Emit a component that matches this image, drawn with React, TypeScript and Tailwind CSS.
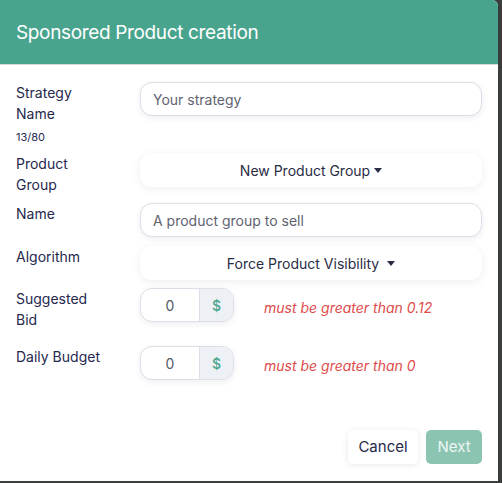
import type { ReactNode } from "react";

function Caret() {
  return (
    <svg width="8" height="5" viewBox="0 0 8 5" aria-hidden className="shrink-0">
      <path d="M0 0h8L4 5z" fill="currentColor" />
    </svg>
  );
}

function Row({ label, note, className, children }: { label: ReactNode; note?: string; className?: string; children: ReactNode }) {
  return (
    <div className={`flex items-start ${className ?? ""}`}>
      <div className="w-[124px] shrink-0 pr-4 text-[14px] leading-[21px] text-[#26284d]">
        {label}
        {note && <div className="mt-[5px] text-[11px] leading-4">{note}</div>}
      </div>
      <div className="min-w-0 flex-1">{children}</div>
    </div>
  );
}

function TextInput({ placeholder }: { placeholder: string }) {
  return (
    <input
      type="text"
      placeholder={placeholder}
      className="h-[34px] w-full rounded-xl border border-[#dcdee8] bg-white px-3 text-[14px] text-[#26284d] shadow-[0_2px_6px_rgba(30,40,60,0.08)] outline-none placeholder:text-[#5f6370]"
    />
  );
}

function Dropdown({ label, wide }: { label: string; wide?: boolean }) {
  return (
    <button
      type="button"
      className={`flex h-[34px] w-full items-center justify-center rounded-xl bg-white text-[14px] text-[#2a2c45] shadow-[0_2px_8px_rgba(30,40,60,0.08)] ${wide ? "gap-2" : "gap-1"}`}
    >
      {label}
      <Caret />
    </button>
  );
}

function MoneyField({ error }: { error: string }) {
  return (
    <div className="flex items-center">
      <div className="flex h-[34px] w-[94px] overflow-hidden rounded-xl border border-[#dcdee8] bg-white shadow-[0_2px_6px_rgba(30,40,60,0.08)]">
        <input
          type="text"
          defaultValue="0"
          className="w-[58px] bg-transparent text-center text-[14px] text-[#555a66] outline-none"
        />
        <span className="flex flex-1 items-center justify-center border-l border-[#dcdee8] bg-[#edf0f4] text-[14px] font-medium text-[#4aa48e]">
          $
        </span>
      </div>
      <p className="ml-[30px] mt-[5px] text-[14px] italic text-[#de4b4b]">{error}</p>
    </div>
  );
}

export default function App() {
  return (
    <div className="h-[483px] w-[502px] overflow-hidden bg-[#3b3d3c] font-['Inter','Noto_Sans',sans-serif]">
      <div className="flex h-[481px] w-[498px] flex-col overflow-hidden rounded-tr-md bg-white">
        <header className="flex h-[65px] shrink-0 items-center border-b border-[#d5dade] bg-[#49a48e] px-4 pt-[2px]">
          <h1 className="text-[19px] font-normal tracking-[-0.35px] text-white">Sponsored Product creation</h1>
        </header>

        <div className="flex flex-1 flex-col px-4 pt-[17px]">
          <Row label={<>Strategy<br />Name</>} note="13/80">
            <TextInput placeholder="Your strategy" />
          </Row>
          <Row label={<>Product<br />Group</>} className="mt-[8px]">
            <Dropdown label="New Product Group" />
          </Row>
          <Row label="Name" className="mt-[8px]">
            <TextInput placeholder="A product group to sell" />
          </Row>
          <Row label="Algorithm" className="mt-[9px]">
            <Dropdown label="Force Product Visibility" wide />
          </Row>
          <Row label={<>Suggested<br />Bid</>} className="mt-[8px]">
            <MoneyField error="must be greater than 0.12" />
          </Row>
          <Row label="Daily Budget" className="mt-[16px]">
            <MoneyField error="must be greater than 0" />
          </Row>

          <div className="mt-auto mb-[17px] flex justify-end gap-2">
            <button
              type="button"
              className="h-[34px] w-[70px] rounded-[5px] bg-white text-[15px] text-[#27294a] shadow-[0_1px_6px_rgba(30,40,60,0.1)]"
            >
              Cancel
            </button>
            <button
              type="button"
              disabled
              className="h-[34px] w-[56px] rounded-[5px] bg-[#8cc4b2] text-[15px] text-white/85"
            >
              Next
            </button>
          </div>
        </div>
      </div>
    </div>
  );
}
